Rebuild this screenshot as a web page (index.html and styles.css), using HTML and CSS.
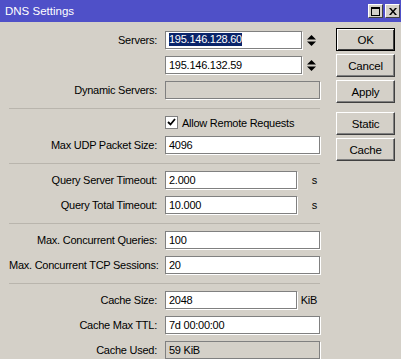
FILE: index.html
```html
<!DOCTYPE html>
<html lang="en">
<head>
    <meta charset="UTF-8">
    <title>DNS Settings</title>
    <link rel="stylesheet" href="styles.css">
</head>
<body>

    <div class="window">
        <div class="titlebar">
            <span class="title">DNS Settings</span>
            <div class="title-buttons">
                <span class="tbtn">
                    <svg width="9" height="9" viewBox="0 0 9 9"><rect x="0.5" y="0.5" width="8" height="8" fill="none" stroke="#000"/><rect x="0" y="0" width="9" height="2" fill="#000"/></svg>
                </span>
                <span class="tbtn">
                    <svg width="8" height="7" viewBox="0 0 8 7"><path d="M0 0h2l2 2.5L6 0h2L5 3.5 8 7H6L4 4.5 2 7H0l3-3.5z" fill="#000"/></svg>
                </span>
            </div>
        </div>

        <div class="content">
            <div class="form">
                <div class="row">
                    <span class="lbl">Servers:</span>
                    <div class="input server"><span class="selected">195.146.128.60</span></div>
                    <svg class="spinner" width="9" height="11" viewBox="0 0 9 11"><polygon points="0,4.5 4.5,0 9,4.5" fill="#000"/><polygon points="0,6.5 9,6.5 4.5,11" fill="#000"/></svg>
                </div>
                <div class="row">
                    <span class="lbl"></span>
                    <div class="input server">195.146.132.59</div>
                    <svg class="spinner" width="9" height="11" viewBox="0 0 9 11"><polygon points="0,4.5 4.5,0 9,4.5" fill="#000"/><polygon points="0,6.5 9,6.5 4.5,11" fill="#000"/></svg>
                </div>
                <div class="row">
                    <span class="lbl">Dynamic Servers:</span>
                    <div class="input disabled"></div>
                </div>

                <div class="sep"></div>

                <div class="row check-row">
                    <span class="lbl"></span>
                    <span class="checkbox">
                        <svg width="9" height="9" viewBox="0 0 9 9"><path d="M1 4l2.5 2.5L8 1" fill="none" stroke="#000" stroke-width="1.8"/></svg>
                    </span>
                    <span class="check-text">Allow Remote Requests</span>
                </div>
                <div class="row">
                    <span class="lbl">Max UDP Packet Size:</span>
                    <div class="input">4096</div>
                </div>

                <div class="sep"></div>

                <div class="row">
                    <span class="lbl">Query Server Timeout:</span>
                    <div class="input short">2.000</div>
                    <span class="unit">s</span>
                </div>
                <div class="row">
                    <span class="lbl">Query Total Timeout:</span>
                    <div class="input short">10.000</div>
                    <span class="unit">s</span>
                </div>

                <div class="sep"></div>

                <div class="row">
                    <span class="lbl">Max. Concurrent Queries:</span>
                    <div class="input">100</div>
                </div>
                <div class="row">
                    <span class="lbl">Max. Concurrent TCP Sessions:</span>
                    <div class="input">20</div>
                </div>

                <div class="sep"></div>

                <div class="row">
                    <span class="lbl">Cache Size:</span>
                    <div class="input short">2048</div>
                    <span class="unit">KiB</span>
                </div>
                <div class="row">
                    <span class="lbl">Cache Max TTL:</span>
                    <div class="input">7d 00:00:00</div>
                </div>
                <div class="row">
                    <span class="lbl">Cache Used:</span>
                    <div class="input disabled">59 KiB</div>
                </div>
            </div>

            <div class="buttons">
                <button class="btn default">OK</button>
                <button class="btn">Cancel</button>
                <button class="btn">Apply</button>
                <button class="btn spaced">Static</button>
                <button class="btn">Cache</button>
            </div>
        </div>
    </div>

</body>
</html>
```

FILE: styles.css
```css
/* Global styles */
body {
    margin: 0;
    padding: 0;
    background-color: #d4d0c8;
    font-family: 'Liberation Sans', Arial, sans-serif;
    font-size: 11px;
    letter-spacing: -0.25px;
    color: #000;
}

.window {
    width: 401px;
    height: 359px;
    overflow: hidden;
    background-color: #d4d0c8;
}

/* Title bar */
.titlebar {
    display: flex;
    justify-content: space-between;
    align-items: center;
    height: 22px;
    background-color: #4f50c8;
    color: #fff;
}

.title {
    padding-left: 5px;
    font-size: 11.5px;
    letter-spacing: 0;
}

.title-buttons {
    display: flex;
    gap: 2px;
    padding-right: 1px;
}

.tbtn {
    display: flex;
    align-items: center;
    justify-content: center;
    width: 13px;
    height: 12px;
    background-color: #d4d0c8;
    border: 1px solid;
    border-color: #fff #404040 #404040 #fff;
}

/* Layout */
.content {
    display: flex;
}

.form {
    display: flex;
    flex-direction: column;
    gap: 7px;
    width: 311px;
    padding: 9px 0 0 9px;
}

.row {
    display: flex;
    align-items: center;
    height: 18px;
}

.lbl {
    width: 148px;
    margin-right: 8px;
    text-align: right;
    white-space: nowrap;
}

.input {
    box-sizing: border-box;
    width: 155px;
    height: 18px;
    line-height: 16px;
    padding: 0 3px;
    background-color: #fff;
    border: 1px solid #808080;
    box-shadow: 1px 1px 0 #fff;
    white-space: nowrap;
}

.input.server {
    width: 137px;
}

.input.short {
    width: 132px;
}

.input.disabled {
    background-color: #d4d0c8;
}

.selected {
    display: inline-block;
    line-height: 13px;
    margin-top: 1px;
    vertical-align: top;
    background-color: #0a246a;
    color: #fff;
}

.spinner {
    margin-left: 5px;
}

.unit {
    width: 20px;
    text-align: right;
}

.sep {
    height: 1px;
    margin-top: 2px;
    background-color: #b9b5ad;
}

.check-row {
    height: 13px;
}

.checkbox {
    box-sizing: border-box;
    display: flex;
    align-items: center;
    justify-content: center;
    width: 13px;
    height: 13px;
    background-color: #fff;
    border: 1px solid #808080;
}

.check-text {
    margin-left: 4px;
    white-space: nowrap;
}

/* Buttons */
.buttons {
    display: flex;
    flex-direction: column;
    gap: 3px;
    margin-left: 16px;
    padding-top: 6px;
}

.btn {
    width: 59px;
    height: 23px;
    padding: 0;
    font-family: inherit;
    font-size: 11.5px;
    letter-spacing: -0.2px;
    background-color: #d4d0c8;
    border: 1px solid;
    border-color: #fff #404040 #404040 #fff;
    box-shadow: inset -1px -1px 0 #808080;
}

.btn.default {
    border: 1px solid #000;
    box-shadow: inset 1px 1px 0 #fff, inset -1px -1px 0 #404040;
}

.btn.spaced {
    margin-top: 6px;
}
```
